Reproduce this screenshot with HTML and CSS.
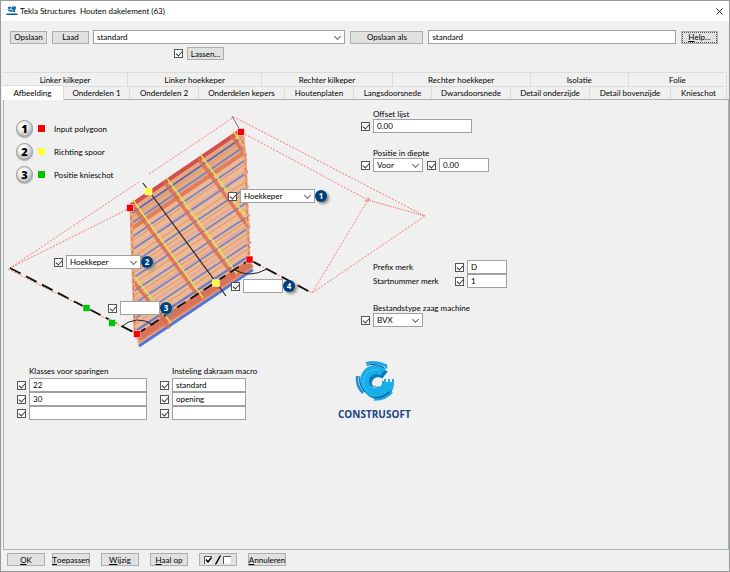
FILE: index.html
```html
<!DOCTYPE html>
<html lang="nl">
<head>
<meta charset="utf-8">
<title>Tekla Structures Houten dakelement (63)</title>
<link rel="stylesheet" href="styles.css">
</head>
<body>
<div class="window">
  <header class="titlebar">
    <svg class="app-icon" width="12" height="10" viewBox="0 0 12 10" aria-hidden="true">
      <path d="M2 1l3-.5v2l-3 .5zM6 .5l4 0v2.500l-1 .5v2.500l-2.500 0v-2.500l-1.500-.5zM1.500 3.500l3 0v2l-1.500 0zM4 4l2 0v2l-1 0z" fill="#1a6fad"/>
      <path d="M1 7.500h10l1 1.500H0z" fill="#0d5b9c"/>
    </svg>
    <h1>Tekla Structures&nbsp; Houten dakelement (63)</h1>
    <button class="close" aria-label="Sluiten">
      <svg width="7" height="7" viewBox="0 0 7 7"><path d="M.5.5l6 6M6.500.5l-6 6" stroke="#222" fill="none"/></svg>
    </button>
  </header>

  <div class="toolbar">
    <button class="btn">Opslaan</button>
    <button class="btn">Laad</button>
    <span class="select profile"><select aria-label="Profiel"><option>standard</option></select></span>
    <button class="btn wide">Opslaan als</button>
    <input class="field save-name" aria-label="Opslaan als naam" value="standard">
    <button class="btn help"><u>H</u>elp...</button>
  </div>
  <div class="toolbar-extra">
    <input type="checkbox" aria-label="Lassen" checked>
    <button class="btn">Lassen...</button>
  </div>

  <nav class="tabs">
    <div class="tab-row upper">
      <button>Linker kilkeper</button><button>Linker hoekkeper</button><button>Rechter kilkeper</button><button>Rechter hoekkeper</button><button>Isolatie</button><button>Folie</button>
    </div>
    <div class="tab-row lower">
      <button class="active">Afbeelding</button><button>Onderdelen 1</button><button>Onderdelen 2</button><button>Onderdelen kepers</button><button>Houtenplaten</button><button>Langsdoorsnede</button><button>Dwarsdoorsnede</button><button>Detail onderzijde</button><button>Detail bovenzijde</button><button>Knieschot</button>
    </div>
  </nav>

  <main class="panel">
    <section class="stage">
      <svg class="drawing" width="430" height="262" viewBox="4 100 430 262" aria-hidden="true">
        <defs>
          <clipPath id="roof"><path d="M128 206L132 201L238 128L246 134L252 258L255 270L139 349L134 340Z"/></clipPath>
        </defs>
        <path d="M130 206L239 131L245 137L249 258L252 270L139 347L135 335Z" fill="#edb995"/>
        <g clip-path="url(#roof)" fill="none">
          <path d="M131 208L243 131L244 150L132 227Z" fill="#e6a97f"/>
          <path d="M132 217l112-77M132 241l113-77M133 257l115-77M133 268l115-77M133 284l116-77M134 296l116-77M134 309l116-77M135 324l116-77" stroke="#dd935c" stroke-width="1"/>
          <path d="M133 247l115-77M133 273l116-77M134 301l116-77M134 314l116-77" stroke="#e0a59c" stroke-opacity=".7" stroke-width="2.500"/>
          <path d="M130 206L243 129" stroke="#d4504a" stroke-width="4"/>
          <path d="M131 229l114-77" stroke="#dc714f" stroke-width="4" stroke-opacity=".8"/>
          <path d="M132 213L243 137" stroke="#6069b4" stroke-width="2"/>
          <path d="M132 223l113-77M132 237l115-78M132 250l116-78M133 263l116-77M133 278l116-77M134 291l116-76M134 304l116-77M134 319l117-77" stroke="#7283cb" stroke-width="1.700"/>
          <path d="M138 338L251 263" stroke="#d8735a" stroke-width="8"/>
          <path d="M139 342L253 267" stroke="#e3895e" stroke-width="1.500"/>
          <path d="M139 346L253 270" stroke="#5274d6" stroke-width="3"/>
          <path d="M137 330L249 256" stroke="#6c7cc6" stroke-width="2.500"/>
          <path d="M131 203l70 97M164 181l71 97M198 158l51 70M231 135l15 21M134 282l36 47" stroke="#dc6a50" stroke-opacity=".8" stroke-width="3.500"/>
        </g>
        <path d="M133 200l70 98M166 177l71 97M200 154l49 67M233 131l11 15M135 277l36 46" stroke="#e5df57" stroke-width="1.500" fill="none"/>
        <path d="M131 209L135 335M241 133l4 22l4 105" stroke="#eda57c" stroke-width="3" fill="none"/>
        <path d="M131 209L135 335M241 133l4 22l4 105" stroke="#d6705a" stroke-width="1" stroke-dasharray="4 3" fill="none"/>
        <g fill="none" stroke="#ff7474" stroke-width="1" stroke-dasharray="2 1.500">
          <path d="M149 174L234 117L425 216L312 293L368 200L241 132"/>
          <path d="M139 182L10 268L130 208M8 269L137 334M250 260L312 293"/>
          <path d="M368 197v6M365 201l6-2"/>
        </g>
        <path d="M368 200L425 216" stroke="#e85858" stroke-dasharray="1 1" fill="none"/>
        <path d="M232 116l9 16" stroke="#9a6666" fill="none"/>
        <path d="M143 183L226 296" stroke="#2b2420" stroke-width="1.200" fill="none"/>
        <g fill="none" stroke="#111" stroke-width="1.800">
          <path d="M10 268L137 334" stroke-dasharray="12 6"/>
          <path d="M137 334L249 260" stroke-dasharray="10 6"/>
          <path d="M250 260L312 293" stroke-dasharray="12 6"/>
        </g>
        <path d="M121 327Q136 314 154 325M233 269Q249 279 267 269" stroke="#222" fill="none"/>
        <g stroke="#fff" stroke-opacity=".5" stroke-width="1">
          <path d="M126.500 204.500h7v7h-7zM237.500 128.500h7v7h-7zM246 256h7v7h-7zM133.500 330.500h7v7h-7z" fill="#f50008"/>
          <path d="M145 188h7v7h-7zM212.500 279.500h7v7h-7z" fill="#ffff35"/>
          <path d="M83 304.500h7v7h-7zM108.500 319.500h7v7h-7z" fill="#00c400"/>
        </g>
      </svg>

      <ol class="legend">
        <li><span class="ball">1</span><i class="swatch red"></i>Input polygoon</li>
        <li><span class="ball">2</span><i class="swatch yellow"></i>Richting spoor</li>
        <li><span class="ball">3</span><i class="swatch green"></i>Positie knieschot</li>
      </ol>

      <div class="callout c1">
        <input type="checkbox" aria-label="Hoek 1 actief" checked>
        <span class="select"><select aria-label="Hoek 1"><option>Hoekkeper</option></select></span>
        <span class="marker">1</span>
      </div>
      <div class="callout c2">
        <input type="checkbox" aria-label="Hoek 2 actief" checked>
        <span class="select"><select aria-label="Hoek 2"><option>Hoekkeper</option></select></span>
        <span class="marker">2</span>
      </div>
      <div class="callout c3">
        <input type="checkbox" aria-label="Hoek 3 actief" checked>
        <input class="field" aria-label="Hoek 3">
        <span class="marker">3</span>
      </div>
      <div class="callout c4">
        <input type="checkbox" aria-label="Hoek 4 actief" checked>
        <input class="field" aria-label="Hoek 4">
        <span class="marker">4</span>
      </div>
    </section>

    <section class="settings">
      <div class="group">
        <label for="offset">Offset lijst</label>
        <div class="row"><input type="checkbox" aria-label="Offset lijst actief" checked><input class="field long" id="offset" value="0.00"></div>
      </div>
      <div class="group depth">
        <label for="depth">Positie in diepte</label>
        <div class="row">
          <input type="checkbox" aria-label="Positie actief" checked>
          <span class="select short"><select id="depth"><option>Voor</option></select></span>
          <input type="checkbox" class="second" aria-label="Diepte actief" checked>
          <input class="field short" aria-label="Diepte" value="0.00">
        </div>
      </div>
      <div class="marks">
        <label for="prefix">Prefix merk</label><input type="checkbox" aria-label="Prefix actief" checked><input class="field" id="prefix" value="D">
        <label for="start">Startnummer merk</label><input type="checkbox" aria-label="Startnummer actief" checked><input class="field" id="start" value="1">
      </div>
      <div class="group">
        <label for="machine">Bestandstype zaag machine</label>
        <div class="row"><input type="checkbox" aria-label="Bestandstype actief" checked><span class="select short"><select id="machine"><option>BVX</option></select></span></div>
      </div>
    </section>

    <section class="lower-area">
      <fieldset class="list classes">
        <legend>Klasses voor sparingen</legend>
        <div class="row"><input type="checkbox" aria-label="Klasse 1 actief" checked><input class="field" aria-label="Klasse 1" value="22"></div>
        <div class="row"><input type="checkbox" aria-label="Klasse 2 actief" checked><input class="field" aria-label="Klasse 2" value="30"></div>
        <div class="row"><input type="checkbox" aria-label="Klasse 3 actief" checked><input class="field" aria-label="Klasse 3"></div>
      </fieldset>
      <fieldset class="list macros">
        <legend>Insteling dakraam macro</legend>
        <div class="row"><input type="checkbox" aria-label="Macro 1 actief" checked><input class="field" aria-label="Macro 1" value="standard"></div>
        <div class="row"><input type="checkbox" aria-label="Macro 2 actief" checked><input class="field" aria-label="Macro 2" value="opening"></div>
        <div class="row"><input type="checkbox" aria-label="Macro 3 actief" checked><input class="field" aria-label="Macro 3"></div>
      </fieldset>
      <div class="brand">
        <svg width="42" height="42" viewBox="-2 0 42 42" aria-hidden="true">
          <g fill="none">
            <path d="M29 14A11 11 0 1 0 33 25" stroke="#087bb9" stroke-width="9" transform="translate(1 1)"/>
            <path d="M28 12A11.500 11.500 0 1 0 32 24" stroke="#17aeea" stroke-width="9"/>
            <path d="M24 10A12 12 0 0 0 13 31" stroke="#42c4f2" stroke-width="1"/>
            <path d="M11 3.500Q20 .5 31 5.500v3" stroke="#17a7e2" stroke-width="2.500"/>
            <path d="M12 5.500Q20 2.500 29 7.500" stroke="#14508d" stroke-width="1"/>
            <path d="M2 16Q1 26 8 33" stroke="#1796d5" stroke-width="2.500"/>
            <path d="M4 16Q4 26 10 32" stroke="#14508d" stroke-width="1"/>
            <path d="M19 39.500Q30 40 37 32" stroke="#17a7e2" stroke-width="2.500"/>
            <path d="M20 37.500Q29 38 35 31" stroke="#14508d" stroke-width="1"/>
            <path d="M15 23Q18 28 24 27" stroke="#0d6dab" stroke-width="1"/>
          </g>
          <path d="M27 21h2v-2h2v3h2v-3h2v3h2v-3h2v6q-1 5-5 7l-7-5z" fill="#17aeea"/>
        </svg>
        <strong>CONSTRUSOFT</strong>
      </div>
    </section>
  </main>

  <footer class="actions">
    <button class="btn"><u>O</u>K</button>
    <button class="btn near"><u>T</u>oepassen</button>
    <button class="btn"><u>W</u>ijzig</button>
    <button class="btn"><u>H</u>aal op</button>
    <button class="btn" aria-label="Alles aan of uit">
      <svg width="30" height="10" viewBox="0 0 30 10"><g fill="none"><path d="M1.500 9V1.500H9M20.500 9V1.500H28" stroke="#555"/><path d="M2 2h6.500v6.500H2zM21 2h6.500v6.500H21z" fill="#fff"/><path d="M3 4.500l2 2.500l3.500-4.500" stroke="#000" stroke-width="1.500"/><path d="M12.500 9.500L17.500.5" stroke="#000" stroke-width="1.500"/></g></svg>
    </button>
    <button class="btn"><u>A</u>nnuleren</button>
  </footer>
</div>
</body>
</html>
```
FILE: styles.css
```css
* { box-sizing: border-box; }

body {
  margin: 0;
  font: 8px/10px Lato, "Open Sans", sans-serif;
  color: #000;
  background: #f0f0f0;
}

button, input, select {
  margin: 0;
  padding: 0;
  font: inherit;
  color: inherit;
  border-radius: 0;
}

.window {
  min-height: 100vh;
  display: flex;
  flex-direction: column;
  border: 1px solid #999;
}

.titlebar {
  height: 20px;
  display: flex;
  align-items: center;
  gap: 2px;
  padding: 0 6px 0 5px;
  background: #fff;
}
.titlebar h1 { flex: 1; margin: 0; font-size: 8px; font-weight: 400; }
.close { display: flex; border: 0; background: none; }

.btn {
  height: 13px;
  width: 37px;
  flex: none;
  display: flex;
  align-items: center;
  justify-content: center;
  white-space: nowrap;
  background: #e1e1e1;
  border: 1px solid #adadad;
}

.field, .select {
  height: 14px;
  border: 1px solid #a0a0a0;
  background: #fff;
}
.field { min-width: 0; padding: 0 3px; }
.select { position: relative; display: block; }
.select select {
  display: block;
  width: 100%;
  height: 12px;
  padding: 0 3px;
  border: 0;
  background: none;
  appearance: none;
}
.select::after {
  content: "";
  position: absolute;
  right: 4px;
  top: 3px;
  width: 4px;
  height: 4px;
  border: solid #666;
  border-width: 0 1px 1px 0;
  transform: rotate(45deg);
  pointer-events: none;
}

input[type="checkbox"] {
  appearance: none;
  flex: none;
  position: relative;
  width: 9px;
  height: 9px;
  border: 1px solid #555;
  background: #fff;
}
input[type="checkbox"]:checked::after {
  content: "";
  position: absolute;
  left: 1px;
  top: 1px;
  width: 5px;
  height: 3px;
  border: solid #333;
  border-width: 0 0 1px 1px;
  transform: rotate(-48deg);
}

.toolbar {
  display: flex;
  align-items: center;
  gap: 5px;
  padding: 9px 11px 0 9px;
}
.toolbar .profile { flex: 255; margin-left: -1px; }
.toolbar .save-name { flex: 244; }
.toolbar .wide { width: 73px; }
.toolbar .help { outline: 1px dotted #555; outline-offset: -2px; }
.toolbar-extra {
  display: flex;
  align-items: center;
  gap: 4px;
  padding: 3px 0 0 173px;
}

.tabs { margin: 12px 2px 0 2px; }
.tab-row { display: grid; }
.tab-row.upper { grid-template-columns: 125fr 134fr 130fr 138fr 98fr 98fr; }
.tab-row.lower { grid-template-columns: 61fr 66fr 69fr 86fr 69fr 78fr 79fr 79fr 81fr 56fr; }
.tab-row button {
  min-width: 0;
  height: 13px;
  border: solid #dcdcdc;
  border-width: 1px 1px 0 0;
  background: #f0f0f0;
  white-space: nowrap;
}
.tab-row.upper button { height: 14px; }
.tab-row .active {
  height: 15px;
  margin: -1px 0 -1px -1px;
  position: relative;
  background: #fff;
}

.panel {
  flex: 1;
  display: grid;
  grid-template-columns: 357px 1fr;
  grid-template-rows: auto 1fr;
  margin: 0 0 0 2px;
  border: 1px solid #abb3b0;
}

.stage { position: relative; height: 260px; }
.drawing { position: absolute; left: 0; top: 0; }

.legend {
  position: relative;
  display: grid;
  gap: 6px;
  margin: 0;
  padding: 20px 0 0 12px;
  list-style: none;
}
.legend li { display: flex; align-items: center; }
.ball {
  display: grid;
  place-items: center;
  width: 17px;
  height: 17px;
  border: 1px solid #999;
  border-radius: 50%;
  background: radial-gradient(circle at 40% 35%, #fff 20%, #999);
  box-shadow: 0 1px 1px #aaa;
  font-family: "Open Sans", sans-serif;
  font-size: 11px;
  font-weight: 800;
}
.swatch { width: 7px; height: 7px; margin: 0 9px 0 5px; }
.red { background: #f50008; }
.yellow { background: #ffff35; }
.green { background: #00c400; }

.callout { position: absolute; display: flex; align-items: center; gap: 3px; }
.callout .select { width: 75px; }
.callout .field { width: 40px; }
.c1 { left: 224px; top: 89px; }
.c2 { left: 50px; top: 155px; }
.c3 { left: 104px; top: 201px; }
.c4 { left: 227px; top: 179px; }
.marker {
  display: grid;
  place-items: center;
  width: 12px;
  height: 12px;
  margin-left: -3px;
  border-radius: 50%;
  background: #003f7c;
  box-shadow: 2px 2px 3px #888;
  color: #fff;
  font-family: "Open Sans", sans-serif;
  font-weight: 700;
}

.settings { position: relative; padding-top: 9px; }
.row { display: flex; align-items: center; gap: 3px; }
.settings label { display: block; }
.group label { margin-left: 12px; }
.field.long { width: 99px; }
.short { width: 50px; }
.second { margin-left: 1px; }
.depth { margin-top: 15px; }
.marks {
  display: grid;
  grid-template-columns: 79px 9px 40px;
  column-gap: 3px;
  align-items: center;
  margin: 88px 0 15px 12px;
}

.lower-area {
  grid-column: 1 / -1;
  display: flex;
  align-items: flex-start;
  padding-left: 13px;
}
.list { min-width: 0; margin: 6px 0 0; padding: 0; border: 0; }
.list legend { margin-left: 12px; padding: 0; height: 12px; white-space: nowrap; }
.classes { width: 143px; }
.classes .field { width: 118px; }
.macros { width: 178px; }
.macros .field { width: 74px; }
.brand { display: flex; flex-direction: column; align-items: center; gap: 3px; }
.brand strong { color: #1d4481; font: 700 10px/18px "Open Sans", sans-serif; }

.actions { display: flex; gap: 11px; padding: 3px 6px 5px; }
.actions .btn { width: 38px; }
.actions .near { margin-left: -4px; }
```
